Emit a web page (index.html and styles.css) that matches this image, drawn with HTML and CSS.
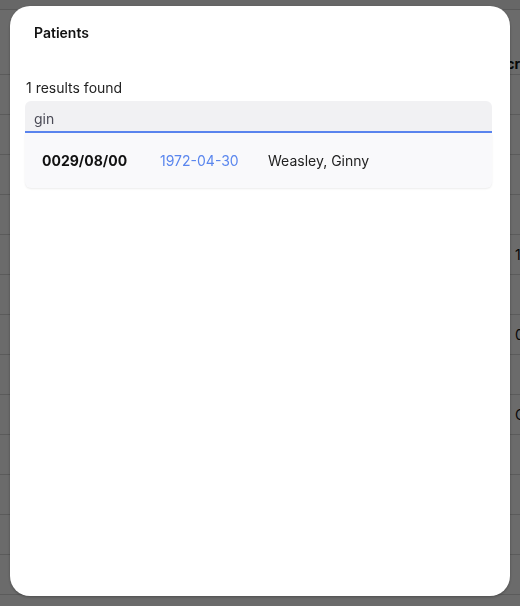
FILE: index.html
```html
<!DOCTYPE html>
<html>
<head>
<meta charset="utf-8">
<link rel="stylesheet" href="styles.css">
</head>
<body>
<div class="page">
  <div class="topbar"></div>
  <div class="table">
    <div class="row head"><div class="cell-a"></div><div class="cell-b">Description</div></div>
    <div class="row"><div class="cell-a"></div><div class="cell-b"></div></div>
    <div class="row"><div class="cell-a"></div><div class="cell-b"></div></div>
    <div class="row"><div class="cell-a"></div><div class="cell-b"></div></div>
    <div class="row"><div class="cell-a"></div><div class="cell-b"></div></div>
    <div class="row"><div class="cell-a"></div><div class="cell-b">11</div></div>
    <div class="row"><div class="cell-a"></div><div class="cell-b"></div></div>
    <div class="row"><div class="cell-a"></div><div class="cell-b">00</div></div>
    <div class="row"><div class="cell-a"></div><div class="cell-b"></div></div>
    <div class="row"><div class="cell-a"></div><div class="cell-b">C0</div></div>
    <div class="row"><div class="cell-a"></div><div class="cell-b"></div></div>
    <div class="row"><div class="cell-a"></div><div class="cell-b"></div></div>
    <div class="row"><div class="cell-a"></div><div class="cell-b"></div></div>
    <div class="row"><div class="cell-a"></div><div class="cell-b"></div></div>
  </div>
</div>
<div class="overlay"></div>
<div class="modal">
  <div class="modal-title">Patients</div>
  <div class="modal-body">
    <div class="count">1 results found</div>
    <div class="search">gin</div>
    <div class="result">
      <span class="pid">0029/08/00</span>
      <span class="dob">1972-04-30</span>
      <span class="name">Weasley, Ginny</span>
    </div>
  </div>
</div>
</body>
</html>
```

FILE: styles.css
```css
* { box-sizing: border-box; }
html, body {
  margin: 0;
  padding: 0;
  width: 520px;
  height: 606px;
  overflow: hidden;
  font-family: Inter, "Noto Sans", sans-serif;
  background: #ffffff;
}
.page {
  width: 520px;
  height: 606px;
  background: #ffffff;
}
.topbar {
  height: 10px;
  background: #f6f6f6;
  border-bottom: 1px solid #d4d4d4;
}
.table {
  display: flex;
  flex-direction: column;
}
.row {
  display: flex;
  height: 40px;
  border-bottom: 1px solid #d8d8d8;
  align-items: center;
  font-size: 14px;
  color: #111;
}
.row.head {
  height: 65px;
  align-items: flex-end;
  padding-bottom: 2px;
  font-weight: 700;
}
.cell-a { width: 515px; flex: none; }
.row.head .cell-a { width: 480px; }
.cell-b { white-space: nowrap; }
.overlay {
  position: fixed;
  inset: 0;
  background: rgba(0, 0, 0, 0.58);
}
.modal {
  position: fixed;
  left: 10px;
  top: 6px;
  width: 500px;
  height: 590px;
  background: #ffffff;
  border-radius: 20px;
  box-shadow: 0 1px 3px rgba(0,0,0,0.3);
}
.modal-title {
  padding: 17px 24px 0 24px;
  height: 62px;
  font-size: 14px;
  line-height: 20px;
  font-weight: 600;
  color: #111;
}
.modal-body {
  padding: 0 18px 0 15px;
}
.count {
  font-size: 14px;
  line-height: 20px;
  color: #222;
  padding-left: 1px;
  height: 23px;
  margin-top: 10px;
}
.search {
  height: 32px;
  background: #f1f1f3;
  border-radius: 6px 6px 0 0;
  border-bottom: 2px solid #5a84ee;
  padding: 8px 9px 2px 9px;
  font-size: 14px;
  line-height: 20px;
  color: #4a4a55;
}
.result {
  height: 55px;
  background: #f9f9fb;
  border-radius: 0 0 6px 6px;
  box-shadow: 0 1px 2px rgba(0,0,0,0.08);
  display: flex;
  align-items: center;
  padding: 1px 0 0 17px;
  font-size: 14px;
  line-height: 20px;
}
.pid {
  font-weight: 700;
  color: #111;
  width: 118px;
}
.dob {
  color: #5a86ee;
  width: 108px;
}
.name {
  color: #222;
}
```
